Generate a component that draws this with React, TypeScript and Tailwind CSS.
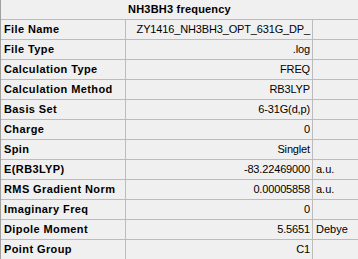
import React from "react";

type Row = { label: string; value: string; unit?: string };

const rows: Row[] = [
  { label: "File Name", value: "ZY1416_NH3BH3_OPT_631G_DP_" },
  { label: "File Type", value: ".log" },
  { label: "Calculation Type", value: "FREQ" },
  { label: "Calculation Method", value: "RB3LYP" },
  { label: "Basis Set", value: "6-31G(d,p)" },
  { label: "Charge", value: "0" },
  { label: "Spin", value: "Singlet" },
  { label: "E(RB3LYP)", value: "-83.22469000", unit: "a.u." },
  { label: "RMS Gradient Norm", value: "0.00005858", unit: "a.u." },
  { label: "Imaginary Freq", value: "0" },
  { label: "Dipole Moment", value: "5.5651", unit: "Debye" },
  { label: "Point Group", value: "C1" },
];

export default function App() {
  return (
    <div
      className="w-[358px] h-[259px] overflow-hidden bg-[#f0f0f0] text-black text-[11px]"
      style={{ fontFamily: '"Liberation Sans", Arial, sans-serif' }}
    >
      <div className="border-l border-[#a0a0a0] h-full">
        <div className="h-[20px] border-b border-[#bcbcbc] flex items-center justify-center font-bold leading-[19px] tracking-[0.2px]">
          NH3BH3 frequency
        </div>
        {rows.map((r) => (
          <div
            key={r.label}
            className="h-[20px] border-b border-[#bcbcbc] grid grid-cols-[125px_187px_45px] leading-[19px]"
          >
            <div className="border-r border-[#bcbcbc] pl-[3px] font-bold tracking-[0.4px] whitespace-nowrap overflow-hidden">
              {r.label}
            </div>
            <div className="border-r border-[#bcbcbc] pr-[2px] text-right tracking-[-0.15px] whitespace-nowrap overflow-hidden">
              {r.value}
            </div>
            <div className="pl-[3px] whitespace-nowrap overflow-hidden">{r.unit ?? ""}</div>
          </div>
        ))}
      </div>
    </div>
  );
}
